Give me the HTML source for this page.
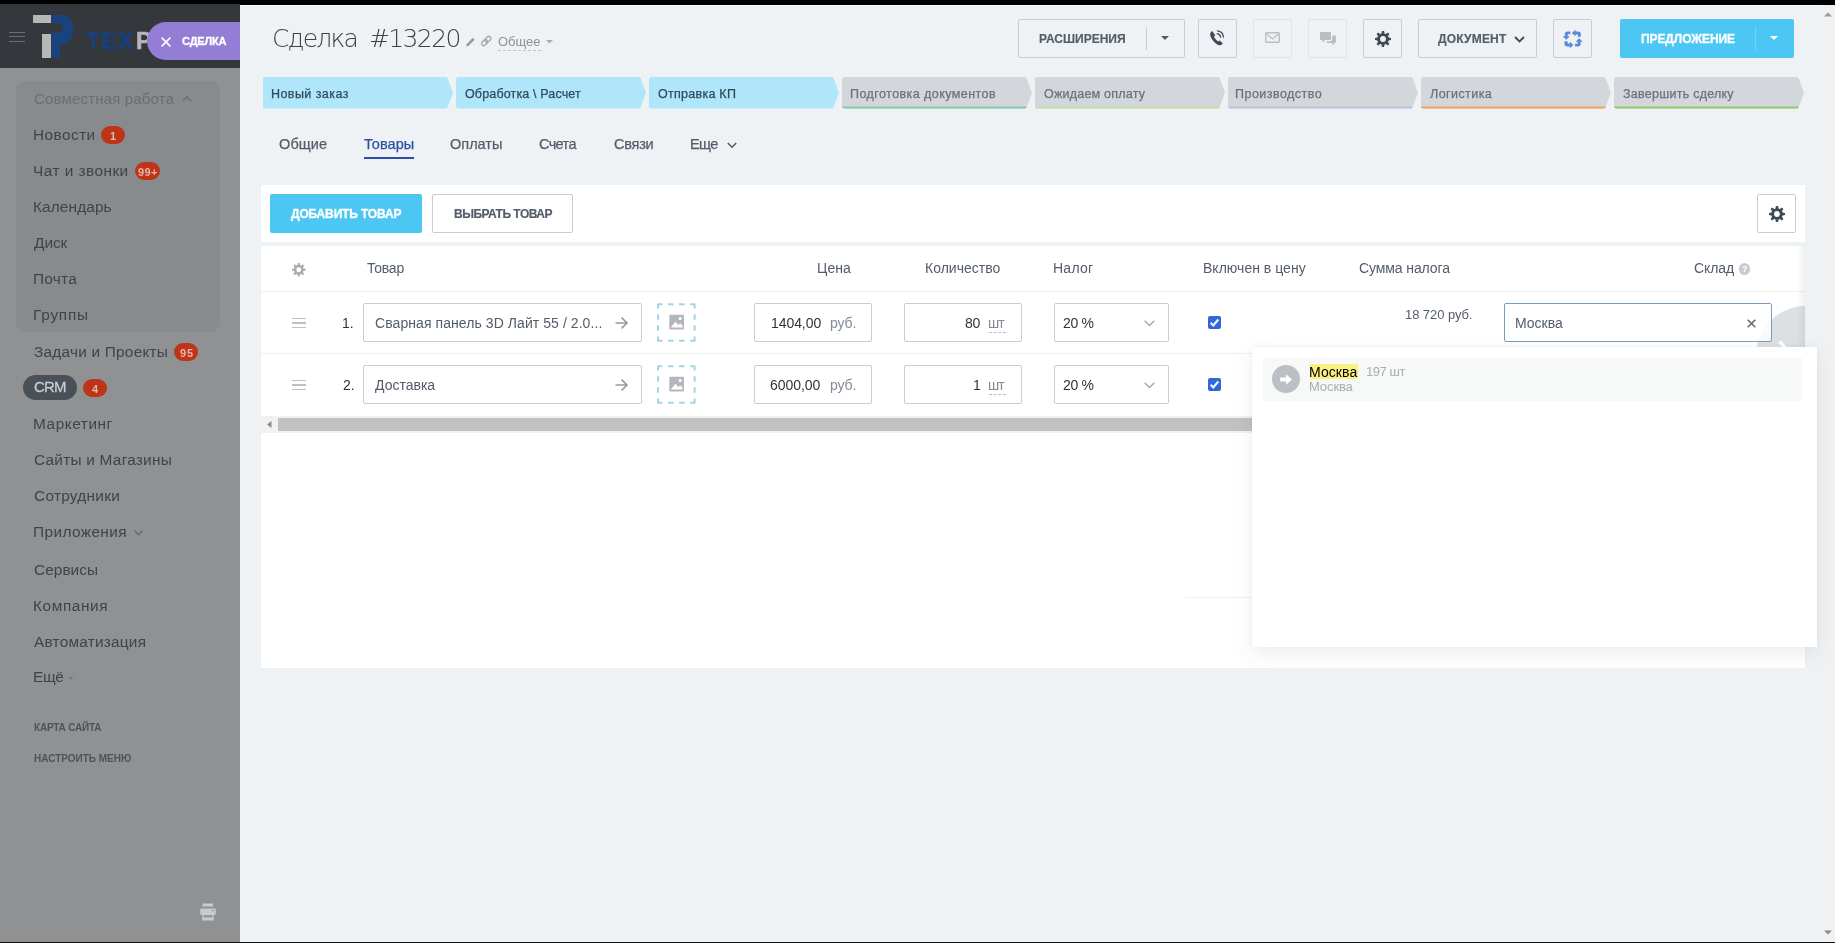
<!DOCTYPE html>
<html lang="ru">
<head>
<meta charset="utf-8">
<title>Сделка #13220</title>
<style>
html,body{margin:0;padding:0;}
body{width:1835px;height:943px;overflow:hidden;position:relative;background:#eef2f4;font-family:"Liberation Sans",sans-serif;}
.a{position:absolute;box-sizing:border-box;}
.t{will-change:transform;position:absolute;white-space:pre;line-height:0;height:0;z-index:2;}
svg{position:absolute;overflow:visible;}
.btn{border:1px solid #c6cdd3;border-radius:2px;}
.inp{border:1px solid #c6cdd3;border-radius:2px;background:#fff;height:39px;}
.bdg{background:#bd3419;border-radius:9px;height:18px;}
.hl{border-top:1px solid #eef0f2;height:1px;}
</style>
</head>
<body>
<div id="window-chrome">
<!-- top black bar -->
<div class="a" style="left:0;top:0;width:1835px;height:4.6px;background:#000;"></div>
<div class="a" style="left:240px;top:4.6px;width:1595px;height:1.2px;background:#fafbfc;"></div>
<!-- browser scrollbar strip -->
<div class="a" style="left:1820px;top:5px;width:15px;height:937px;background:#f1f1f1;"></div>
<svg style="left:1824px;top:12px" width="8" height="5" viewBox="0 0 8 5"><path d="M0 4.5 L4 0.5 L8 4.5Z" fill="#9a9a9a"/></svg>
<svg style="left:1824px;top:930px" width="8" height="5" viewBox="0 0 8 5"><path d="M0 0.5 L4 4.5 L8 0.5Z" fill="#8a8a8a"/></svg>
<div class="a" style="left:0;top:941.5px;width:1835px;height:1.5px;background:#111;"></div>

</div>
<aside id="left-menu">
<!-- ================= SIDEBAR ================= -->
<div class="a" style="left:0;top:4px;width:240px;height:938px;background:#8f9193;"></div>
<div class="a" style="left:0;top:4px;width:240px;height:64px;background:#34383d;"></div>
<!-- hamburger -->
<div class="a" style="left:9px;top:31.5px;width:16px;height:1.1px;background:#6b6f75;"></div>
<div class="a" style="left:9px;top:36.4px;width:16px;height:1.1px;background:#6b6f75;"></div>
<div class="a" style="left:9px;top:41.3px;width:16px;height:1.1px;background:#6b6f75;"></div>
<!-- logo -->
<div class="a" style="left:33px;top:14.6px;width:17.7px;height:8.1px;background:#b7b7b7;"></div>
<div class="a" style="left:42.3px;top:34.1px;width:8.4px;height:24.4px;background:#b7b7b7;"></div>
<svg style="left:50px;top:14px" width="24" height="46" viewBox="50 14 24 46"><path d="M51.7 15 H61 C69.5 15 73.2 21.5 73.2 29.5 C73.2 38.5 68 44.9 60 44.9 V57.8 H51.7 V32.6 H58.5 C61 32.6 62.4 30.8 62.4 27.8 C62.4 24.8 61 23 58.5 23 H51.7 Z" fill="#19437f"/></svg>
<!-- purple pill -->
<div class="a" style="left:147px;top:22px;width:93px;height:38px;background:#947dd4;border-radius:19px 0 0 19px;z-index:3;"></div>
<svg style="left:161px;top:36.5px;z-index:4" width="10" height="10" viewBox="0 0 10 10"><path d="M0.6 0.6 L9.4 9.4 M9.4 0.6 L0.6 9.4" stroke="#fff" stroke-width="1.5" fill="none"/></svg>
<!-- group box -->
<div class="a" style="left:16px;top:81px;width:204px;height:251px;background:#878b8d;border-radius:9px;"></div>
<svg style="left:182px;top:96px" width="10" height="6" viewBox="0 0 10 6"><path d="M0.7 5.3 L5 1 L9.3 5.3" stroke="#6a6e73" stroke-width="1.4" fill="none"/></svg>
<!-- badges -->
<div class="a bdg" style="left:101px;top:126px;width:24px;"></div>
<div class="a bdg" style="left:135px;top:162px;width:25px;"></div>
<div class="a bdg" style="left:174px;top:343px;width:24px;"></div>
<div class="a bdg" style="left:83px;top:379px;width:24px;"></div>
<!-- CRM pill -->
<div class="a" style="left:23px;top:375px;width:54px;height:25px;background:#4a5058;border-radius:12.5px;"></div>
<!-- chevrons -->
<svg style="left:134.4px;top:530.4px" width="9" height="6" viewBox="0 0 9 6"><path d="M0.6 0.6 L4.5 4.6 L8.4 0.6" stroke="#5d6268" stroke-width="1.1" fill="none"/></svg>
<svg style="left:68.4px;top:676.5px" width="5.4" height="3" viewBox="0 0 6 3"><path d="M0 0 H6 L3 3Z" fill="#6f7378"/></svg>
<!-- printer icon -->
<svg style="left:200px;top:902.5px" width="16" height="17.5" viewBox="0 0 16 17.5"><path d="M2.5 0.4 H13.1 V3.5 H2.5Z M1.2 5.5 H14.8 A1 1 0 0 1 15.8 6.5 V11.7 H0.2 V6.5 A1 1 0 0 1 1.2 5.5Z M2.2 11.7 H13.7 V17.4 H2.2Z" fill="#c8cacc"/><path d="M3.6 12.2 H12.4 V14.3 H3.6Z" fill="#8f9193"/><path d="M12.2 7 H14 V8.2 H12.2Z" fill="#8f9193"/></svg>

<span class="t" style="left:34.4px;top:98.8px;font-size:15px;color:#6a6e73;letter-spacing:0.17px;">Совместная работа</span>
<span class="t" style="left:33.4px;top:134.7px;font-size:15.4px;color:#3f444b;letter-spacing:0.44px;">Новости</span>
<span class="t" style="left:33.4px;top:170.7px;font-size:15.4px;color:#3f444b;letter-spacing:0.46px;">Чат и звонки</span>
<span class="t" style="left:33.4px;top:206.5px;font-size:15.4px;color:#3f444b;letter-spacing:0.12px;">Календарь</span>
<span class="t" style="left:34.4px;top:242.5px;font-size:15.4px;color:#3f444b;letter-spacing:-0.04px;">Диск</span>
<span class="t" style="left:33.4px;top:278.5px;font-size:15.4px;color:#3f444b;letter-spacing:0.26px;">Почта</span>
<span class="t" style="left:33.4px;top:314.5px;font-size:15.4px;color:#3f444b;letter-spacing:0.76px;">Группы</span>
<span class="t" style="left:34.4px;top:351.7px;font-size:15.4px;color:#3f444b;letter-spacing:0.22px;">Задачи и Проекты</span>
<span class="t" style="left:33.4px;top:423.7px;font-size:15.4px;color:#3f444b;letter-spacing:0.55px;">Маркетинг</span>
<span class="t" style="left:34.4px;top:459.5px;font-size:15.4px;color:#3f444b;letter-spacing:0.24px;">Сайты и Магазины</span>
<span class="t" style="left:34.4px;top:495.7px;font-size:15.4px;color:#3f444b;letter-spacing:0.27px;">Сотрудники</span>
<span class="t" style="left:33.4px;top:532.3px;font-size:15.4px;color:#3f444b;letter-spacing:0.39px;">Приложения</span>
<span class="t" style="left:34.4px;top:569.7px;font-size:15.4px;color:#3f444b;letter-spacing:0.05px;">Сервисы</span>
<span class="t" style="left:33.4px;top:605.7px;font-size:15.4px;color:#3f444b;letter-spacing:0.59px;">Компания</span>
<span class="t" style="left:34.4px;top:641.5px;font-size:15.4px;color:#3f444b;letter-spacing:0.22px;">Автоматизация</span>
<span class="t" style="left:33.4px;top:676.5px;font-size:15.4px;color:#3f444b;letter-spacing:-0.36px;">Ещё</span>
<span class="t" style="left:34.0px;top:387.4px;font-size:15px;color:#c9cbcd;letter-spacing:-0.83px;-webkit-text-stroke:0.3px #c9cbcd;">CRM</span>
<span class="t" style="left:34.4px;top:727.5px;font-size:10px;color:#4f5359;font-weight:700;letter-spacing:-0.2px;">КАРТА САЙТА</span>
<span class="t" style="left:34.4px;top:758.5px;font-size:10px;color:#4f5359;font-weight:700;letter-spacing:-0.01px;">НАСТРОИТЬ МЕНЮ</span>
<span class="t" style="left:110.3px;top:135.5px;font-size:11px;color:#e9b5ab;font-weight:700;">1</span>
<span class="t" style="left:138.3px;top:171.5px;font-size:11px;color:#e9b5ab;font-weight:700;letter-spacing:0.38px;">99+</span>
<span class="t" style="left:179.5px;top:352.5px;font-size:11px;color:#e9b5ab;font-weight:700;letter-spacing:0.88px;">95</span>
<span class="t" style="left:91.8px;top:388.5px;font-size:11px;color:#e9b5ab;font-weight:700;">4</span>
<span class="t" style="left:85.8px;top:40.6px;font-size:23px;color:#18407e;font-weight:700;letter-spacing:1.1px;-webkit-text-stroke:0.6px #18407e;">ТЕХ</span>
<span class="t" style="left:135.8px;top:40.8px;font-size:23.5px;color:#b5b5b5;font-weight:700;-webkit-text-stroke:0.6px #b5b5b5;">Р</span>
<span class="t" style="left:182.4px;top:41.2px;font-size:11px;color:#ffffff;font-weight:700;letter-spacing:-0.16px;-webkit-text-stroke:0.3px #ffffff;z-index:4;">СДЕЛКА</span>
</aside>
<header id="deal-header">
<!-- ================= MAIN HEADER ================= -->
<!-- pencil + link -->
<svg style="left:466px;top:36.5px" width="9.5" height="9.5" viewBox="0 0 10 10"><path d="M0 10 L0.8 7.3 L7.1 0.9 L9.1 2.9 L2.7 9.2 Z" fill="#959ba2"/></svg>
<svg style="left:480.5px;top:36px" width="10.5" height="10" viewBox="0 0 10.5 10"><g fill="none" stroke="#a0a6ad" stroke-width="1.3"><rect x="-3.4" y="-2.1" width="6.8" height="4.2" rx="2.1" transform="translate(3.6 6.6) rotate(-45)"/><rect x="-3.4" y="-2.1" width="6.8" height="4.2" rx="2.1" transform="translate(6.9 3.4) rotate(-45)"/></g></svg>
<div class="a" style="left:498px;top:50px;width:43px;height:0;border-top:1px dashed #bfc4c9;"></div>
<svg style="left:546px;top:40px" width="7" height="3.5" viewBox="0 0 7 3.5"><path d="M0 0 H7 L3.5 3.5Z" fill="#a8adb4"/></svg>

<!-- РАСШИРЕНИЯ -->
<div class="a btn" style="left:1018px;top:19px;width:167px;height:39px;"></div>
<div class="a" style="left:1146px;top:27px;width:1px;height:23px;background:#c6cdd3;"></div>
<svg style="left:1161px;top:36px" width="8" height="4" viewBox="0 0 8 4"><path d="M0 0 H8 L4 4Z" fill="#535c69"/></svg>
<!-- icon buttons -->
<div class="a btn" style="left:1198px;top:19px;width:39px;height:39px;"></div>
<div class="a btn" style="left:1253px;top:19px;width:39px;height:39px;border-color:#dfe3e7;"></div>
<div class="a btn" style="left:1308px;top:19px;width:39px;height:39px;border-color:#dfe3e7;"></div>
<div class="a btn" style="left:1363px;top:19px;width:39px;height:39px;"></div>
<!-- phone icon -->
<svg style="left:1209px;top:30px" width="16" height="16" viewBox="0 0 16 16"><path d="M3.2 0.9 C2 1.6 0.8 3 1.2 5 C1.9 8.7 5.6 13.3 9.4 14.9 C11.3 15.7 12.9 14.7 13.7 13.5 L10.9 10.6 L9.2 11.6 C7.6 10.8 5.6 8.3 5 6.6 L6.3 5.2 Z" fill="#424956"/><path d="M8.2 3.6 C10 3.9 11.4 5.3 11.6 7.1 M8.4 0.9 C11.7 1.3 14.2 3.8 14.5 7.1" fill="none" stroke="#424956" stroke-width="1.3" stroke-linecap="round"/></svg>
<!-- mail icon -->
<svg style="left:1265px;top:32px" width="15" height="11" viewBox="0 0 15 11"><rect x="0.7" y="0.7" width="13.6" height="9.6" rx="1" fill="none" stroke="#b9bec4" stroke-width="1.4"/><path d="M1.2 1.6 L7.5 7 L13.8 1.6" fill="none" stroke="#b9bec4" stroke-width="1.3"/></svg>
<!-- chat icon -->
<svg style="left:1320px;top:31.5px" width="16" height="14" viewBox="0 0 16 14"><path d="M1 0 H10 A1 1 0 0 1 11 1 V7 A1 1 0 0 1 10 8 H5 L2.5 10.5 V8 H1 A1 1 0 0 1 0 7 V1 A1 1 0 0 1 1 0Z" fill="#b9bec4"/><path d="M12.2 3.5 H15 A1 1 0 0 1 16 4.5 V10 A1 1 0 0 1 15 11 H14 V13.5 L11.5 11 H7.5 A1 1 0 0 1 6.6 10 V9.2 H10.4 A1.8 1.8 0 0 0 12.2 7.4Z" fill="#b9bec4"/></svg>
<!-- gear icon -->
<svg style="left:1374.5px;top:30.5px" width="16" height="16" viewBox="-8 -8 16 16"><use href="#gear" fill="#424956"/></svg>
<!-- ДОКУМЕНТ -->
<div class="a btn" style="left:1418px;top:19px;width:119px;height:39px;"></div>
<svg style="left:1514px;top:36px" width="11" height="7" viewBox="0 0 11 7"><path d="M1 1 L5.5 5.5 L10 1" stroke="#424956" stroke-width="1.9" fill="none"/></svg>
<!-- refresh -->
<div class="a btn" style="left:1553px;top:19px;width:39px;height:39px;"></div>
<svg style="left:1563.3px;top:29.5px" width="19.4" height="18" viewBox="0 0 19 19" preserveAspectRatio="none"><defs><g id="rfa"><path d="M11.8 3.2 H14.6 A1.4 1.4 0 0 1 16 4.6 V7.2" fill="none" stroke="#5a8ad9" stroke-width="3"/><path d="M12.3 -0.3 V6.7 L8.6 3.2Z" fill="#5a8ad9"/></g></defs><use href="#rfa"/><use href="#rfa" transform="rotate(-90 9.5 9.5)"/><use href="#rfa" transform="rotate(180 9.5 9.5)"/><use href="#rfa" transform="rotate(90 9.5 9.5)"/></svg>
<!-- ПРЕДЛОЖЕНИЕ -->
<div class="a" style="left:1620px;top:19px;width:174px;height:39px;background:#4cc7f3;border-radius:2px;"></div>
<div class="a" style="left:1755px;top:26px;width:1px;height:25px;background:#74d2f5;"></div>
<svg style="left:1770px;top:36px" width="8" height="4" viewBox="0 0 8 4"><path d="M0 0 H8 L4 4Z" fill="#fff"/></svg>

<!-- gear def -->
<svg width="0" height="0" style="left:0;top:0"><defs><path id="gear" fill-rule="evenodd" d="M-1.50 -5.60 L-1.10 -8.00 L1.10 -8.00 L1.50 -5.60 A5.80 5.80 0 0 1 2.90 -5.02 L4.88 -6.43 L6.43 -4.88 L5.02 -2.90 A5.80 5.80 0 0 1 5.60 -1.50 L8.00 -1.10 L8.00 1.10 L5.60 1.50 A5.80 5.80 0 0 1 5.02 2.90 L6.43 4.88 L4.88 6.43 L2.90 5.02 A5.80 5.80 0 0 1 1.50 5.60 L1.10 8.00 L-1.10 8.00 L-1.50 5.60 A5.80 5.80 0 0 1 -2.90 5.02 L-4.88 6.43 L-6.43 4.88 L-5.02 2.90 A5.80 5.80 0 0 1 -5.60 1.50 L-8.00 1.10 L-8.00 -1.10 L-5.60 -1.50 A5.80 5.80 0 0 1 -5.02 -2.90 L-6.43 -4.88 L-4.88 -6.43 L-2.90 -5.02 A5.80 5.80 0 0 1 -1.50 -5.60 Z M0 -2.90 A2.90 2.90 0 1 0 0 2.90 A2.90 2.90 0 1 0 0 -2.90 Z"/></defs></svg>
<!-- ================= STAGES ================= -->
<svg style="left:263px;top:77px" width="191" height="32" viewBox="0 0 191 32"><path d="M2.5 0 H182.5 Q184 0 184.6 1.3 L190 15.75 L184.6 30.2 Q184 31.5 182.5 31.5 H2.5 Q0 31.5 0 29 V2.5 Q0 0 2.5 0Z" fill="#b0e6fa"/></svg>
<svg style="left:456px;top:77px" width="191" height="32" viewBox="0 0 191 32"><path d="M2.5 0 H182.5 Q184 0 184.6 1.3 L190 15.75 L184.6 30.2 Q184 31.5 182.5 31.5 H2.5 Q0 31.5 0 29 V2.5 Q0 0 2.5 0Z" fill="#b0e6fa"/></svg>
<svg style="left:649px;top:77px" width="191" height="32" viewBox="0 0 191 32"><path d="M2.5 0 H182.5 Q184 0 184.6 1.3 L190 15.75 L184.6 30.2 Q184 31.5 182.5 31.5 H2.5 Q0 31.5 0 29 V2.5 Q0 0 2.5 0Z" fill="#b0e6fa"/></svg>
<svg style="left:842px;top:77px" width="191" height="32" viewBox="0 0 191 32"><path d="M2.5 0 H182.5 Q184 0 184.6 1.3 L190 15.75 L184.6 30.2 Q184 31.5 182.5 31.5 H2.5 Q0 31.5 0 29 V2.5 Q0 0 2.5 0Z" fill="#d3d7dc"/><path d="M0 29.6 H184.9 L184.6 30.2 Q184 31.5 182.5 31.5 H2.5 Q0 31.5 0 29.6Z" fill="#86c9ad"/></svg>
<svg style="left:1035px;top:77px" width="191" height="32" viewBox="0 0 191 32"><path d="M2.5 0 H182.5 Q184 0 184.6 1.3 L190 15.75 L184.6 30.2 Q184 31.5 182.5 31.5 H2.5 Q0 31.5 0 29 V2.5 Q0 0 2.5 0Z" fill="#d3d7dc"/><path d="M0 29.6 H184.9 L184.6 30.2 Q184 31.5 182.5 31.5 H2.5 Q0 31.5 0 29.6Z" fill="#c5dfa6"/></svg>
<svg style="left:1228px;top:77px" width="191" height="32" viewBox="0 0 191 32"><path d="M2.5 0 H182.5 Q184 0 184.6 1.3 L190 15.75 L184.6 30.2 Q184 31.5 182.5 31.5 H2.5 Q0 31.5 0 29 V2.5 Q0 0 2.5 0Z" fill="#d3d7dc"/><path d="M0 29.6 H184.9 L184.6 30.2 Q184 31.5 182.5 31.5 H2.5 Q0 31.5 0 29.6Z" fill="#c3bfe0"/></svg>
<svg style="left:1421px;top:77px" width="191" height="32" viewBox="0 0 191 32"><path d="M2.5 0 H182.5 Q184 0 184.6 1.3 L190 15.75 L184.6 30.2 Q184 31.5 182.5 31.5 H2.5 Q0 31.5 0 29 V2.5 Q0 0 2.5 0Z" fill="#d3d7dc"/><path d="M0 29.6 H184.9 L184.6 30.2 Q184 31.5 182.5 31.5 H2.5 Q0 31.5 0 29.6Z" fill="#f0a35c"/></svg>
<svg style="left:1614px;top:77px" width="191" height="32" viewBox="0 0 191 32"><path d="M2.5 0 H182.5 Q184 0 184.6 1.3 L190 15.75 L184.6 30.2 Q184 31.5 182.5 31.5 H2.5 Q0 31.5 0 29 V2.5 Q0 0 2.5 0Z" fill="#d3d7dc"/><path d="M0 29.6 H184.9 L184.6 30.2 Q184 31.5 182.5 31.5 H2.5 Q0 31.5 0 29.6Z" fill="#8fcc66"/></svg>
<!-- tab underline + chevron -->
<div class="a" style="left:363.5px;top:156.5px;width:50px;height:2.5px;background:#2c4fa3;"></div>
<svg style="left:726.5px;top:141.5px" width="10" height="7" viewBox="0 0 10 7"><path d="M0.8 1 L5 5.2 L9.2 1" stroke="#535c69" stroke-width="1.6" fill="none"/></svg>
<span class="t" style="left:271.6px;top:39.3px;font-size:25px;color:#3d4249;font-weight:200;font-family:'DejaVu Sans', 'Liberation Sans', sans-serif;letter-spacing:-1.84px;">Сделка</span>
<span class="t" style="left:369.0px;top:39.3px;font-size:25px;color:#3d4249;font-weight:200;font-family:'DejaVu Sans', 'Liberation Sans', sans-serif;letter-spacing:-1.63px;">#13220</span>
<span class="t" style="left:498.4px;top:41.5px;font-size:13px;color:#8d9399;letter-spacing:-0.03px;">Общее</span>
<span class="t" style="left:1039.0px;top:38.8px;font-size:12px;color:#535c69;font-weight:700;-webkit-text-stroke:0.15px #535c69;">РАСШИРЕНИЯ</span>
<span class="t" style="left:1437.8px;top:38.8px;font-size:12px;color:#535c69;font-weight:700;letter-spacing:0.19px;-webkit-text-stroke:0.15px #535c69;">ДОКУМЕНТ</span>
<span class="t" style="left:1641.0px;top:38.8px;font-size:12px;color:#ffffff;font-weight:700;letter-spacing:-0.09px;-webkit-text-stroke:0.3px #ffffff;">ПРЕДЛОЖЕНИЕ</span>
<span class="t" style="left:270.8px;top:93.7px;font-size:12.5px;color:#2f4a5b;letter-spacing:0.44px;-webkit-text-stroke:0.25px #2f4a5b;">Новый заказ</span>
<span class="t" style="left:465.0px;top:93.7px;font-size:12.5px;color:#2f4a5b;letter-spacing:0.15px;-webkit-text-stroke:0.25px #2f4a5b;">Обработка \ Расчет</span>
<span class="t" style="left:657.8px;top:93.7px;font-size:12.5px;color:#2f4a5b;letter-spacing:0.27px;-webkit-text-stroke:0.25px #2f4a5b;">Отправка КП</span>
<span class="t" style="left:850.0px;top:93.7px;font-size:12.5px;color:#6b7079;letter-spacing:0.44px;-webkit-text-stroke:0.25px #6b7079;">Подготовка документов</span>
<span class="t" style="left:1043.8px;top:93.7px;font-size:12.5px;color:#6b7079;letter-spacing:0.22px;-webkit-text-stroke:0.25px #6b7079;">Ожидаем оплату</span>
<span class="t" style="left:1235.3px;top:93.7px;font-size:12.5px;color:#6b7079;letter-spacing:0.47px;-webkit-text-stroke:0.25px #6b7079;">Производство</span>
<span class="t" style="left:1429.6px;top:93.7px;font-size:12.5px;color:#6b7079;letter-spacing:0.43px;-webkit-text-stroke:0.25px #6b7079;">Логистика</span>
<span class="t" style="left:1622.6px;top:93.7px;font-size:12.5px;color:#6b7079;letter-spacing:0.25px;-webkit-text-stroke:0.25px #6b7079;">Завершить сделку</span>
<span class="t" style="left:279.4px;top:144.0px;font-size:14.5px;color:#535c69;letter-spacing:0.1px;-webkit-text-stroke:0.25px #535c69;">Общие</span>
<span class="t" style="left:363.6px;top:144.0px;font-size:14.5px;color:#2c4fa3;letter-spacing:0.07px;-webkit-text-stroke:0.25px #2c4fa3;">Товары</span>
<span class="t" style="left:450.4px;top:144.0px;font-size:14.5px;color:#535c69;-webkit-text-stroke:0.25px #535c69;">Оплаты</span>
<span class="t" style="left:539.0px;top:144.0px;font-size:14.5px;color:#535c69;letter-spacing:-0.63px;-webkit-text-stroke:0.25px #535c69;">Счета</span>
<span class="t" style="left:614.4px;top:144.0px;font-size:14.5px;color:#535c69;letter-spacing:-0.23px;-webkit-text-stroke:0.25px #535c69;">Связи</span>
<span class="t" style="left:690.1px;top:144.0px;font-size:14.5px;color:#535c69;letter-spacing:-0.57px;-webkit-text-stroke:0.25px #535c69;">Еще</span>
</header>
<main id="deal-products">
<!-- ================= WHITE PANELS ================= -->
<div class="a" style="left:261px;top:184.5px;width:1544px;height:57.3px;background:#fff;"></div>
<div class="a" style="left:261px;top:246px;width:1544px;height:422px;background:#fff;"></div>
<!-- toolbar buttons -->
<div class="a" style="left:270px;top:194px;width:152px;height:39px;background:#4cc7f3;border-radius:2px;"></div>
<div class="a btn" style="left:432px;top:194px;width:141px;height:39px;"></div>
<div class="a btn" style="left:1757px;top:194px;width:39px;height:39px;"></div>
<svg style="left:1769px;top:206px" width="16" height="16" viewBox="-8 -8 16 16"><use href="#gear" fill="#424956"/></svg>
<!-- header row -->
<svg style="left:291.5px;top:262.5px" width="13.5" height="13.5" viewBox="-8 -8 16 16"><use href="#gear" fill="#a9aeb4"/></svg>
<div class="a hl" style="left:261px;top:291px;width:1544px;"></div>
<div class="a hl" style="left:261px;top:353px;width:1544px;"></div>
<!-- question icon -->
<div class="a" style="left:1738.5px;top:263px;width:11.5px;height:11.5px;border-radius:6px;background:#c8ccd1;"></div>
<!-- ================= ROWS ================= -->
<!-- row 1 -->
<div class="a" style="left:292px;top:317.6px;width:14px;height:1.6px;background:#bcc0c5;"></div>
<div class="a" style="left:292px;top:322.2px;width:14px;height:1.6px;background:#bcc0c5;"></div>
<div class="a" style="left:292px;top:326.8px;width:14px;height:1.6px;background:#bcc0c5;"></div>
<div class="a inp" style="left:363px;top:303px;width:279px;"></div>
<svg style="left:615px;top:317.0px" width="13" height="12" viewBox="0 0 13 12"><path d="M0.5 6 H12 M6.6 0.6 L12 6 L6.6 11.4" stroke="#939aa1" stroke-width="1.6" fill="none"/></svg>
<svg style="left:657px;top:303.2px" width="39" height="39" viewBox="0 0 39 39"><path d="M1 1.2 H37.6 V37.8 H1 Z" fill="none" stroke="#a3d5e3" stroke-width="2" stroke-linejoin="round" stroke-dasharray="8.8 5.56 5.56 5.56 5.56 5.56" stroke-dashoffset="4.4"/><path d="M13.3 11.8 H26 A1 1 0 0 1 27 12.8 V25.5 A1 1 0 0 1 26 26.5 H13.3 A1 1 0 0 1 12.3 25.5 V12.8 A1 1 0 0 1 13.3 11.8Z" fill="#b3b7bd"/><path d="M13.8 24.6 L18.4 18.8 L21.3 22 L23.2 20.2 L25.6 22.8 V24.6Z" fill="#fff"/><circle cx="23.2" cy="15.6" r="1.5" fill="#fff"/></svg>
<div class="a inp" style="left:754px;top:303px;width:118px;"></div>
<div class="a inp" style="left:904px;top:303px;width:118px;"></div>
<div class="a" style="left:988.5px;top:332.0px;width:17px;height:0;border-top:1px dashed #b9bec4;"></div>
<div class="a inp" style="left:1054px;top:303px;width:115px;"></div>
<svg style="left:1144px;top:320.0px" width="11" height="7" viewBox="0 0 11 7"><path d="M0.7 0.8 L5.5 5.6 L10.3 0.8" stroke="#a3a9b1" stroke-width="1.4" fill="none"/></svg>
<svg style="left:1208px;top:316px" width="13" height="13" viewBox="0 0 13 13"><rect width="13" height="13" rx="2" fill="#3267d9"/><path d="M2.7 6.8 L5.3 9.4 L10.3 3.5" stroke="#f4f9ff" stroke-width="2.1" fill="none"/></svg>
<!-- row 2 -->
<div class="a" style="left:292px;top:379.6px;width:14px;height:1.6px;background:#bcc0c5;"></div>
<div class="a" style="left:292px;top:384.2px;width:14px;height:1.6px;background:#bcc0c5;"></div>
<div class="a" style="left:292px;top:388.8px;width:14px;height:1.6px;background:#bcc0c5;"></div>
<div class="a inp" style="left:363px;top:365px;width:279px;"></div>
<svg style="left:615px;top:379.0px" width="13" height="12" viewBox="0 0 13 12"><path d="M0.5 6 H12 M6.6 0.6 L12 6 L6.6 11.4" stroke="#939aa1" stroke-width="1.6" fill="none"/></svg>
<svg style="left:657px;top:365.2px" width="39" height="39" viewBox="0 0 39 39"><path d="M1 1.2 H37.6 V37.8 H1 Z" fill="none" stroke="#a3d5e3" stroke-width="2" stroke-linejoin="round" stroke-dasharray="8.8 5.56 5.56 5.56 5.56 5.56" stroke-dashoffset="4.4"/><path d="M13.3 11.8 H26 A1 1 0 0 1 27 12.8 V25.5 A1 1 0 0 1 26 26.5 H13.3 A1 1 0 0 1 12.3 25.5 V12.8 A1 1 0 0 1 13.3 11.8Z" fill="#b3b7bd"/><path d="M13.8 24.6 L18.4 18.8 L21.3 22 L23.2 20.2 L25.6 22.8 V24.6Z" fill="#fff"/><circle cx="23.2" cy="15.6" r="1.5" fill="#fff"/></svg>
<div class="a inp" style="left:754px;top:365px;width:118px;"></div>
<div class="a inp" style="left:904px;top:365px;width:118px;"></div>
<div class="a" style="left:988.5px;top:394.0px;width:17px;height:0;border-top:1px dashed #b9bec4;"></div>
<div class="a inp" style="left:1054px;top:365px;width:115px;"></div>
<svg style="left:1144px;top:382.0px" width="11" height="7" viewBox="0 0 11 7"><path d="M0.7 0.8 L5.5 5.6 L10.3 0.8" stroke="#a3a9b1" stroke-width="1.4" fill="none"/></svg>
<svg style="left:1208px;top:378px" width="13" height="13" viewBox="0 0 13 13"><rect width="13" height="13" rx="2" fill="#3267d9"/><path d="M2.7 6.8 L5.3 9.4 L10.3 3.5" stroke="#f4f9ff" stroke-width="2.1" fill="none"/></svg>
<!-- ear (scroll right) -->
<div class="a" style="left:1700px;top:246px;width:105px;height:170px;overflow:hidden;">
  <div class="a" style="left:56px;top:60px;width:100px;height:100px;border-radius:50px;background:rgba(120,130,145,.25);"></div>
  <svg style="left:78px;top:94px" width="16" height="32" viewBox="0 0 16 32"><path d="M1.5 1.5 L14.5 16 L1.5 30.5" stroke="#fff" stroke-width="3.5" fill="none"/></svg>
  <div class="a" style="left:96px;top:0;width:9px;height:170px;background:linear-gradient(90deg,rgba(82,92,105,0),rgba(82,92,105,.09));"></div>
</div>
<!-- store input -->
<div class="a inp" style="left:1504px;top:303px;width:268px;border-color:#7d9cb8;background:rgba(255,255,255,.82);"></div>
<svg style="left:1747px;top:318.5px" width="9" height="9" viewBox="0 0 9 9"><path d="M0.7 0.7 L8.3 8.3 M8.3 0.7 L0.7 8.3" stroke="#636b76" stroke-width="1.6" fill="none"/></svg>
<!-- horizontal scrollbar -->
<div class="a" style="left:261px;top:415.5px;width:1544px;height:17.5px;background:#f1f1f1;"></div>
<div class="a" style="left:278px;top:418px;width:1500px;height:12.8px;background:#c1c1c1;"></div>
<svg style="left:266.5px;top:421px" width="4.5" height="7" viewBox="0 0 4.5 7"><path d="M4.5 0 V7 L0 3.5Z" fill="#8b8b8b"/></svg>
<div class="a" style="left:1185px;top:597px;width:70px;height:1px;background:#eff0f2;"></div>
<span class="t" style="left:291.0px;top:213.8px;font-size:12px;color:#ffffff;font-weight:700;letter-spacing:-0.15px;-webkit-text-stroke:0.3px #ffffff;">ДОБАВИТЬ ТОВАР</span>
<span class="t" style="left:453.6px;top:213.8px;font-size:12px;color:#535c69;font-weight:700;letter-spacing:-0.5px;-webkit-text-stroke:0.15px #535c69;">ВЫБРАТЬ ТОВАР</span>
<span class="t" style="left:366.6px;top:268.1px;font-size:14px;color:#535c69;letter-spacing:-0.23px;">Товар</span>
<span class="t" style="left:816.6px;top:268.1px;font-size:14px;color:#535c69;letter-spacing:0.04px;">Цена</span>
<span class="t" style="left:925.4px;top:268.1px;font-size:14px;color:#535c69;letter-spacing:0.02px;">Количество</span>
<span class="t" style="left:1053.4px;top:268.1px;font-size:14px;color:#535c69;letter-spacing:0.25px;">Налог</span>
<span class="t" style="left:1203.4px;top:268.1px;font-size:14px;color:#535c69;letter-spacing:0.02px;">Включен в цену</span>
<span class="t" style="left:1359.4px;top:268.1px;font-size:14px;color:#535c69;letter-spacing:-0.1px;">Сумма налога</span>
<span class="t" style="left:1693.6px;top:268.1px;font-size:14px;color:#535c69;letter-spacing:-0.09px;">Склад</span>
<span class="t" style="left:341.6px;top:323.1px;font-size:14px;color:#333333;">1.</span>
<span class="t" style="left:375.0px;top:323.1px;font-size:14px;color:#535c69;letter-spacing:0.07px;">Сварная панель 3D Лайт 55 / 2.0...</span>
<span class="t" style="left:770.6px;top:323.1px;font-size:14px;color:#333333;letter-spacing:-0.07px;">1404,00</span>
<span class="t" style="left:829.6px;top:323.1px;font-size:14px;color:#828b95;letter-spacing:-0.13px;">руб.</span>
<span class="t" style="left:964.6px;top:323.1px;font-size:14px;color:#333333;letter-spacing:-0.39px;">80</span>
<span class="t" style="left:988.4px;top:323.1px;font-size:14px;color:#828b95;letter-spacing:-1.03px;">шт</span>
<span class="t" style="left:1063.4px;top:323.1px;font-size:14px;color:#333333;letter-spacing:-0.29px;">20 %</span>
<span class="t" style="left:1404.6px;top:314.5px;font-size:13px;color:#535c69;letter-spacing:-0.07px;">18 720 руб.</span>
<span class="t" style="left:1515.4px;top:323.1px;font-size:14px;color:#535c69;">Москва</span>
<span class="t" style="left:342.6px;top:385.1px;font-size:14px;color:#333333;">2.</span>
<span class="t" style="left:375.0px;top:385.1px;font-size:14px;color:#535c69;">Доставка</span>
<span class="t" style="left:770.4px;top:385.1px;font-size:14px;color:#333333;letter-spacing:-0.04px;">6000,00</span>
<span class="t" style="left:829.6px;top:385.1px;font-size:14px;color:#828b95;letter-spacing:-0.13px;">руб.</span>
<span class="t" style="left:972.6px;top:385.1px;font-size:14px;color:#333333;">1</span>
<span class="t" style="left:988.4px;top:385.1px;font-size:14px;color:#828b95;letter-spacing:-1.03px;">шт</span>
<span class="t" style="left:1063.4px;top:385.1px;font-size:14px;color:#333333;letter-spacing:-0.29px;">20 %</span>
<span class="t" style="left:1742.2px;top:268.9px;font-size:9px;color:#ffffff;font-weight:700;">?</span>
</main>
<div id="store-dropdown">
<!-- ================= DROPDOWN ================= -->
<div class="a" style="left:1252px;top:347px;width:565px;height:300px;background:#fff;box-shadow:0 7px 18px rgba(83,92,105,.10),0 -1px 5px rgba(83,92,105,.05);z-index:30;"></div>
<div class="a" style="left:1262.5px;top:358px;width:539.5px;height:42.5px;background:#f7f8f8;z-index:30;"></div>
<div class="a" style="left:1272px;top:365px;width:28px;height:28px;border-radius:14px;background:#bcc0c5;z-index:30;"></div>
<svg style="left:1279px;top:372.5px;z-index:30" width="14" height="13" viewBox="0 0 14 13"><path d="M1.2 4.4 H7 V1.2 L13 6.5 L7 11.8 V8.6 H1.2Z" fill="#fff"/></svg>
<div class="a" style="left:1310px;top:364px;width:48px;height:15px;background:#fbf082;z-index:30;"></div>
<span class="t" style="left:1309.4px;top:371.5px;font-size:14px;color:#000000;letter-spacing:0.08px;z-index:31;">Москва</span>
<span class="t" style="left:1366.0px;top:371.9px;font-size:13px;color:#a8adb4;letter-spacing:-0.43px;z-index:31;">197 шт</span>
<span class="t" style="left:1309.4px;top:387.1px;font-size:13px;color:#a8adb4;letter-spacing:-0.11px;z-index:31;">Москва</span>
</div>
</body>
</html>
